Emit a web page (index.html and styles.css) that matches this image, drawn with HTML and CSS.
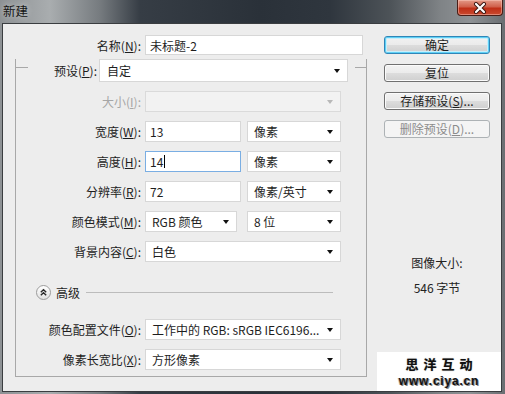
FILE: index.html
```html
<!DOCTYPE html>
<html lang="zh-CN">
<head>
    <meta charset="UTF-8">
    <title>新建</title>
    <link rel="stylesheet" href="styles.css">
</head>
<body>
<div class="window">
    <div class="titlebar">
        <span class="title">新建</span>
        <span class="close">
            <svg width="16" height="12" viewBox="0 0 16 12">
                <path d="M4 2 L12 10 M12 2 L4 10" stroke="#3b1510" stroke-width="4" stroke-linecap="round"/>
                <path d="M4 2 L12 10 M12 2 L4 10" stroke="#fff" stroke-width="2.2" stroke-linecap="round"/>
            </svg>
        </span>
    </div>

    <div class="client">
        <div class="main">
            <div class="row name-row">
                <label class="lbl">名称(<u>N</u>):</label>
                <div class="field input w-name">未标题-2</div>
            </div>

            <div class="group">
                <div class="group-head">
                    <label class="lbl">预设(<u>P</u>):</label>
                    <div class="field select w-preset">自定</div>
                </div>

                <div class="row">
                    <label class="lbl disabled">大小(<u>I</u>):</label>
                    <div class="field select disabled w-full"></div>
                </div>
                <div class="row">
                    <label class="lbl">宽度(<u>W</u>):</label>
                    <div class="field input w-num">13</div>
                    <div class="field select w-unit">像素</div>
                </div>
                <div class="row">
                    <label class="lbl">高度(<u>H</u>):</label>
                    <div class="field input focus w-num">14<span class="caret"></span></div>
                    <div class="field select w-unit">像素</div>
                </div>
                <div class="row">
                    <label class="lbl">分辨率(<u>R</u>):</label>
                    <div class="field input w-num">72</div>
                    <div class="field select w-unit">像素/英寸</div>
                </div>
                <div class="row">
                    <label class="lbl">颜色模式(<u>M</u>):</label>
                    <div class="field select w-mode">RGB 颜色</div>
                    <div class="field select w-unit gap-wide">8 位</div>
                </div>
                <div class="row">
                    <label class="lbl">背景内容(<u>C</u>):</label>
                    <div class="field select w-full">白色</div>
                </div>

                <div class="advanced">
                    <span class="toggle">
                        <svg width="15" height="15" viewBox="0 0 15 15">
                            <path d="M4.8 7.3 L7.5 4.8 L10.2 7.3 M4.8 10.3 L7.5 7.8 L10.2 10.3" fill="none" stroke="#2a2a2a" stroke-width="1.4"/>
                        </svg>
                    </span>
                    <span class="adv-text">高级</span>
                    <span class="adv-line"></span>
                </div>

                <div class="row row-profile">
                    <label class="lbl">颜色配置文件(<u>O</u>):</label>
                    <div class="field select w-full">工作中的 RGB: sRGB IEC6196...</div>
                </div>
                <div class="row">
                    <label class="lbl">像素长宽比(<u>X</u>):</label>
                    <div class="field select w-full">方形像素</div>
                </div>
            </div>
        </div>

        <div class="side">
            <button class="btn default">确定</button>
            <button class="btn">复位</button>
            <button class="btn">存储预设(<u>S</u>)...</button>
            <button class="btn" disabled>删除预设(<u>D</u>)...</button>

            <div class="info">
                <p>图像大小:</p>
                <p>546 字节</p>
            </div>
        </div>

        <div class="watermark">
            <div class="wm-title">思洋互动</div>
            <div class="wm-url">www.ciya.cn</div>
        </div>
    </div>
</div>
</body>
</html>
```

FILE: styles.css
```css
* {
    box-sizing: border-box;
}
body {
    margin: 0;
    font-family: "Noto Sans CJK SC", "Noto Sans", sans-serif;
    font-size: 12px;
    color: #1e1e1e;
}
u {
    text-decoration-thickness: 1px;
    text-underline-offset: 1px;
}

.window {
    width: 505px;
    height: 394px;
    overflow: hidden;
    background: linear-gradient(90deg, #8d9194 0, #a9adaf 50px, #767b7f 100px, #363d45 140px, #2a3139 260px, #2f363e 330px, #4d5358 390px, #7f8386 440px, #8e9295 470px, #6a6e72 505px);
}
.titlebar {
    height: 23px;
    display: flex;
    justify-content: space-between;
    align-items: flex-start;
}
.title {
    padding-left: 3px;
    line-height: 22px;
    font-size: 12.5px;
    color: #141414;
    text-shadow: 0 0 6px rgba(255,255,255,0.6);
}
.close {
    width: 46px;
    height: 16px;
    margin-right: 2px;
    display: flex;
    align-items: center;
    justify-content: center;
    border: 1px solid #4a1d16;
    border-top: none;
    border-radius: 0 0 4px 4px;
    background: linear-gradient(#e39a88 0%, #d0604b 45%, #bf2f17 55%, #c94a30 100%);
    box-shadow: inset 0 0 0 1px rgba(255,210,200,0.45);
}

.client {
    position: relative;
    display: flex;
    height: 369px;
    margin: 0 3px 0 2px;
    border: 1px solid #3a3d40;
    background-color: #ededed;
}
.main {
    width: 364px;
    padding-top: 11px;
}

.row {
    display: flex;
    align-items: center;
    height: 21px;
    margin-top: 9px;
}
.name-row {
    height: 20px;
    margin-top: 0;
}
.lbl {
    width: 125px;
    margin-right: 4px;
    text-align: right;
    white-space: nowrap;
}
.name-row .lbl {
    width: 138px;
}
.lbl.disabled {
    color: #a6a6a6;
}

.field {
    display: flex;
    align-items: center;
    height: 100%;
    padding: 0 4px;
    background-color: #fff;
    border: 1px solid #d7d7d7;
    white-space: nowrap;
    overflow: hidden;
}
.select {
    padding-left: 6px;
}
.select::after {
    content: "";
    margin-left: auto;
    margin-right: 3px;
    border-left: 3.5px solid transparent;
    border-right: 3.5px solid transparent;
    border-top: 4px solid #111;
}
.field.disabled {
    background-color: #f2f2f2;
    border-color: #dadada;
}
.field.disabled::after {
    border-top-color: #b8b8b8;
}
.field.focus {
    border-color: #7aaee3;
}
.caret {
    width: 1px;
    height: 13px;
    margin-left: 1px;
    background-color: #000;
}

.w-name { width: 218px; }
.w-preset { width: 249px; height: 23px; padding-left: 7px; }
.w-full { width: 196px; }
.w-num { width: 96px; }
.w-unit { width: 94px; margin-left: 6px; }
.w-mode { width: 92px; }
.gap-wide { margin-left: 10px; }

.group {
    margin: 12px 0 0 12px;
    padding-bottom: 6px;
    border: 1px solid #a8a8a8;
    border-top: none;
}
.group-head {
    display: flex;
    align-items: flex-start;
    height: 23px;
    margin: -8px -1px 0 -1px;
}
.group-head::before,
.group-head::after {
    content: "";
    height: 0;
    margin-top: 8px;
    border-top: 1px solid #a8a8a8;
}
.group-head::before {
    width: 13px;
}
.group-head::after {
    flex: 1;
    margin-left: 7px;
}
.group-head .lbl {
    width: 69px;
    margin-right: 2px;
    line-height: 23px;
}

.advanced {
    display: flex;
    align-items: center;
    height: 20px;
    margin-top: 20px;
    padding-left: 20px;
}
.toggle {
    display: flex;
    width: 15px;
    height: 15px;
    border: 1px solid #9c9c9c;
    border-radius: 50%;
    background: linear-gradient(#ffffff, #e2e2e2);
}
.toggle svg {
    margin: -1px;
}
.adv-text {
    margin-left: 5px;
}
.adv-line {
    flex: 1;
    height: 1px;
    margin: 0 33px 0 6px;
    background-color: #bcbcbc;
}
.row-profile {
    margin-top: 17px;
}

.side {
    display: flex;
    flex-direction: column;
    width: 106px;
    margin-left: 17px;
    padding-top: 12px;
}
.btn {
    height: 18px;
    margin-bottom: 10px;
    padding: 0;
    font-family: inherit;
    font-size: 12px;
    line-height: 16px;
    color: #1e1e1e;
    border: 1px solid #707070;
    border-radius: 3px;
    background: linear-gradient(#f2f2f2 0%, #ebebeb 50%, #dddddd 50%, #cfcfcf 100%);
    box-shadow: inset 0 0 0 1px #fbfbfb;
}
.btn.default {
    border-color: #2f86b8;
    box-shadow: inset 0 0 0 1px #5fd0f5, inset 0 0 0 2px #c8eefb;
}
.btn:disabled {
    color: #8c8c8c;
    border-color: #adb2b5;
    background: #f4f4f4;
    box-shadow: none;
}

.info {
    margin-top: 105px;
    text-align: center;
    color: #222;
}
.info p {
    margin: 0 0 5px 0;
    line-height: 20px;
}

.watermark {
    position: absolute;
    right: 0;
    bottom: 0;
    width: 124px;
    height: 39px;
    padding-top: 4px;
    background-color: #fff;
    text-align: center;
    color: #111;
}
.wm-title {
    height: 16px;
    font-size: 13px;
    font-weight: bold;
    letter-spacing: 5px;
    line-height: 16px;
    padding-left: 5px;
    text-shadow: 0 0 1px #777;
}
.wm-url {
    margin-top: 2px;
    font-family: "Liberation Sans", Arial, sans-serif;
    font-size: 12px;
    font-weight: bold;
    letter-spacing: 0.8px;
    line-height: 14px;
    text-shadow: 1px 1px 0 #888, -1px 0 0 #bbb;
}
```
